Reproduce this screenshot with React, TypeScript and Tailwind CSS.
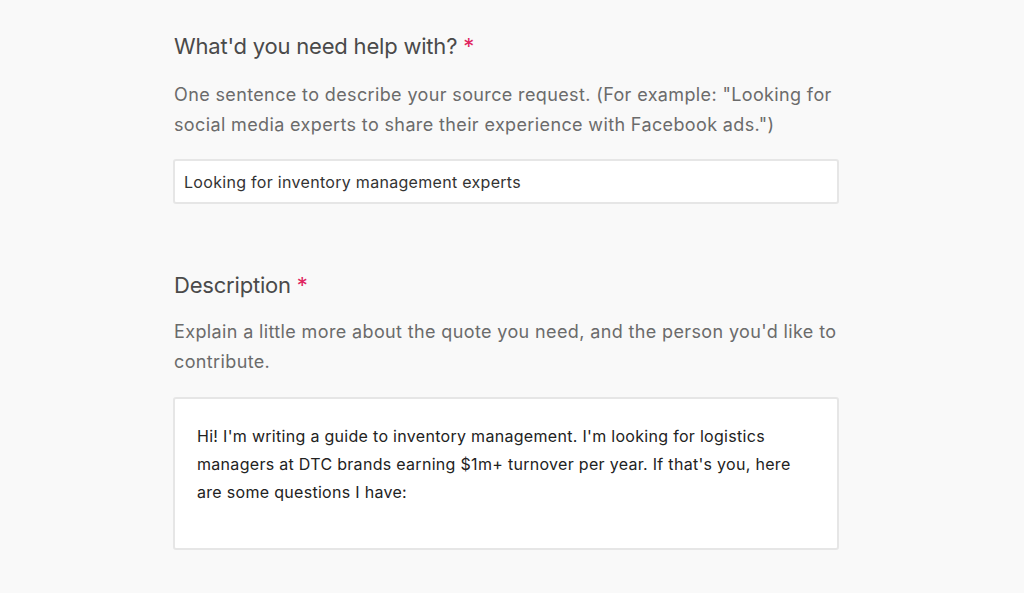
export default function App() {
  return (
    <div className="min-h-[593px] w-full bg-[#f9f9f9] font-['Inter','Noto_Sans',sans-serif]">
      <div className="ml-[173px] w-[666px] pt-[31px] flex flex-col">
        <FieldLabel>What'd you need help with?</FieldLabel>
        <p className="mt-[19px] pl-px text-[18px] leading-[30px] tracking-[0.37px] text-[#6b6b6b]">
          One sentence to describe your source request. (For example: "Looking for social media experts to share their experience with Facebook ads.")
        </p>
        <div className="mt-[19px] h-[45px] flex items-center border-2 border-[#e6e6e6] rounded-[3px] bg-white px-[9px] text-[16px] tracking-[0.3px] text-[#333]">
          Looking for inventory management experts
        </div>

        <div className="mt-[66px]">
          <FieldLabel>Description</FieldLabel>
        </div>
        <p className="mt-[17px] pl-px text-[18px] leading-[30px] tracking-[0.37px] text-[#6b6b6b]">
          Explain a little more about the quote you need, and the person you'd like to contribute.
        </p>
        <div className="mt-[20px] h-[153px] border-2 border-[#e6e6e6] rounded-[3px] bg-white px-[22px] pt-[23px] text-[16px] leading-[28px] tracking-[0.3px] text-[#222]">
          Hi! I'm writing a guide to inventory management. I'm looking for logistics managers at DTC brands earning $1m+ turnover per year. If that's you, here are some questions I have:
        </div>
      </div>
    </div>
  );
}

function FieldLabel({ children }: { children: React.ReactNode }) {
  return (
    <h2 className="px-px text-[22px] leading-[30px] tracking-[-0.2px] text-[#4a4a4a]">
      {children} <span className="text-[#e0245e]">*</span>
    </h2>
  );
}
